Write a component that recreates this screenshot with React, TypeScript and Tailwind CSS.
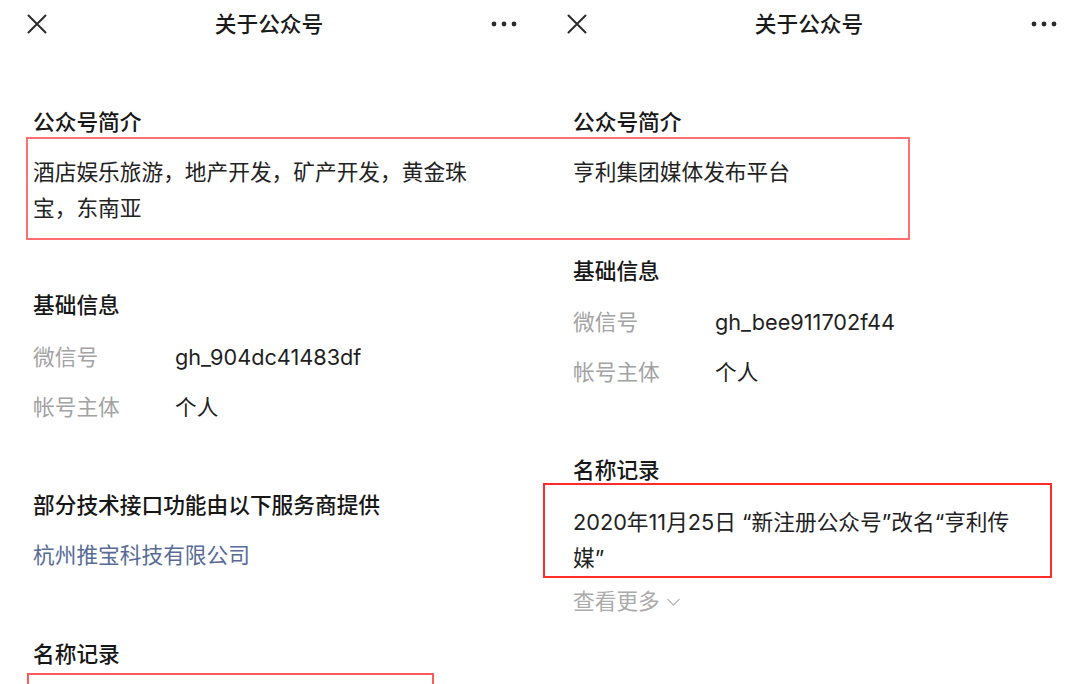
import React from "react";

function CloseIcon() {
  return (
    <svg width="20" height="20" viewBox="0 0 20 20" className="block">
      <path d="M1.5 1.5 L18.5 18.5 M18.5 1.5 L1.5 18.5" stroke="#2b2b2b" strokeWidth="2" strokeLinecap="round" fill="none" />
    </svg>
  );
}

function DotsIcon() {
  return (
    <svg width="26" height="6" viewBox="0 0 26 6" className="block">
      <circle cx="3" cy="3" r="2.4" fill="#2b2b2b" />
      <circle cx="13" cy="3" r="2.4" fill="#2b2b2b" />
      <circle cx="23" cy="3" r="2.4" fill="#2b2b2b" />
    </svg>
  );
}

function Header() {
  return (
    <div className="flex h-12 items-center pl-[27px] pr-[23px]">
      <div className="w-[20px]">
        <CloseIcon />
      </div>
      <div className="flex-1 text-center text-[21.7px] font-medium text-[#1a1a1a]">关于公众号</div>
      <div className="w-[26px]">
        <DotsIcon />
      </div>
    </div>
  );
}

function SectionTitle({ children, className = "" }: { children: React.ReactNode; className?: string }) {
  return <div className={"text-[21.7px] leading-[36px] font-medium text-[#171717] " + className}>{children}</div>;
}

function InfoRow({ label, value }: { label: string; value: string }) {
  return (
    <div className="flex h-[50px] items-center text-[21.7px]">
      <div className="w-[142px] text-[#a3a3a3]">{label}</div>
      <div className="text-[#1f1f1f]">{value}</div>
    </div>
  );
}

function LeftPanel() {
  return (
    <div className="flex w-[540px] flex-col">
      <Header />
      <div className="flex flex-col pl-[33px]">
        <SectionTitle className="mt-[56px]">公众号简介</SectionTitle>
        <div className="mt-[14px] text-[21.7px] leading-[36px] text-[#222]">
          酒店娱乐旅游，地产开发，矿产开发，黄金珠
          <br />
          宝，东南亚
        </div>
        <SectionTitle className="mt-[61px]">基础信息</SectionTitle>
        <div className="mt-[9px] flex flex-col">
          <InfoRow label="微信号" value="gh_904dc41483df" />
          <InfoRow label="帐号主体" value="个人" />
        </div>
        <SectionTitle className="mt-[55px]">部分技术接口功能由以下服务商提供</SectionTitle>
        <div className="mt-[14px] text-[21.7px] leading-[36px] text-[#576b95]">杭州推宝科技有限公司</div>
        <SectionTitle className="mt-[63px]">名称记录</SectionTitle>
      </div>
    </div>
  );
}

function RightPanel() {
  return (
    <div className="flex w-[540px] flex-col">
      <Header />
      <div className="flex flex-col pl-[33px]">
        <SectionTitle className="mt-[56px]">公众号简介</SectionTitle>
        <div className="mt-[14px] text-[21.7px] leading-[36px] text-[#222]">亨利集团媒体发布平台</div>
        <SectionTitle className="mt-[63px]">基础信息</SectionTitle>
        <div className="mt-[8px] flex flex-col">
          <InfoRow label="微信号" value="gh_bee911702f44" />
          <InfoRow label="帐号主体" value="个人" />
        </div>
        <SectionTitle className="mt-[55px]">名称记录</SectionTitle>
        <div className="mt-[16px] text-[21.7px] leading-[36px] text-[#222]">
          2020年11月25日 “新注册公众号”改名“亨利传
          <br />
          媒”
        </div>
        <div className="mt-[7px] flex items-center text-[21.7px] leading-[36px] text-[#acacac]">
          <span>查看更多</span>
          <svg width="15" height="10" viewBox="0 0 15 10" className="ml-[6px] mt-[2px] block">
            <path d="M1.5 2 L7.5 8 L13.5 2" stroke="#b8b8b8" strokeWidth="1.3" fill="none" />
          </svg>
        </div>
      </div>
    </div>
  );
}

export default function App() {
  return (
    <div
      lang="zh-CN"
      className="relative flex h-[684px] w-[1080px] overflow-hidden bg-white font-[Inter,'Noto_Sans_CJK_SC',sans-serif]"
    >
      <LeftPanel />
      <RightPanel />
      <div className="pointer-events-none absolute left-[26px] top-[137px] h-[103px] w-[884px] border-2 border-[#ff6f6f]" />
      <div className="pointer-events-none absolute left-[543px] top-[483px] h-[95px] w-[509px] border-2 border-[#ff2b2b]" />
      <div className="pointer-events-none absolute left-[27px] top-[673px] h-[40px] w-[407px] border-2 border-[#ff5a5a]" />
    </div>
  );
}
